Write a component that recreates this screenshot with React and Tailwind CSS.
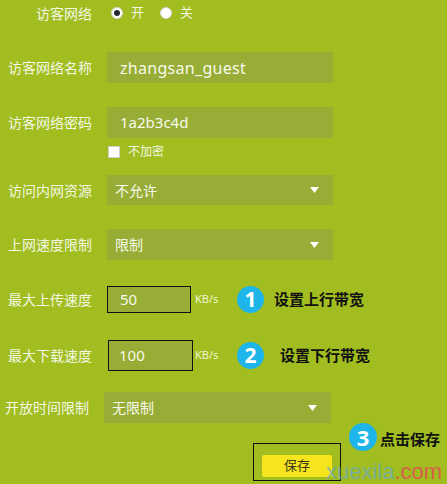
import React from "react";

const labelCls = "w-[92px] text-right text-[14px] text-[#f4f7e2] shrink-0";
const inputCls = "h-full bg-[#97ad36] flex items-center text-[#f7f9ea]";

function Triangle() {
  return (
    <svg width="9" height="6" viewBox="0 0 9 6" className="ml-auto mr-[14px]">
      <path d="M0 0 L9 0 L4.5 6 Z" fill="#ffffff" />
    </svg>
  );
}

function Radio({ checked }) {
  return (
    <span className="w-[12px] h-[12px] rounded-full bg-white border border-[#d8d8d8] flex items-center justify-center">
      {checked && <span className="w-[6px] h-[6px] rounded-full bg-[#222a33]" />}
    </span>
  );
}

function Badge({ n }) {
  return (
    <span className="w-[27px] h-[27px] rounded-full bg-[#1db5ea] text-white font-bold text-[21px] flex items-center justify-center leading-none">
      {n}
    </span>
  );
}

export default function App() {
  return (
    <div
      className="relative w-[447px] h-[484px] overflow-hidden bg-[#a1bd1f]"
      style={{ fontFamily: '"Noto Sans", "Noto Sans CJK SC", sans-serif' }}
    >
      {/* 访客网络 开/关 */}
      <div className="flex items-center h-[26px]">
        <span className={labelCls}>访客网络</span>
        <span className="ml-[19px]"><Radio checked /></span>
        <span className="ml-[8px] text-[13px] text-[#f4f7e2]">开</span>
        <span className="ml-[16px]"><Radio /></span>
        <span className="ml-[8px] text-[13px] text-[#f4f7e2]">关</span>
      </div>

      <div className="flex items-center mt-[26px] h-[31px]">
        <span className={labelCls}>访客网络名称</span>
        <div className={`${inputCls} ml-[15px] w-[226px] pl-[13px] text-[16px] tracking-[0.3px]`}>zhangsan_guest</div>
      </div>

      <div className="flex items-center mt-[24px] h-[31px]">
        <span className={labelCls}>访客网络密码</span>
        <div className={`${inputCls} ml-[15px] w-[226px] pl-[13px] text-[15px]`}>1a2b3c4d</div>
      </div>

      <div className="flex items-center mt-[8px] h-[12px] pl-[108px]">
        <span className="w-[12px] h-[12px] bg-white border border-[#cfcfcf]" />
        <span className="ml-[8px] text-[12px] text-[#f4f7e2]">不加密</span>
      </div>

      <div className="flex items-center mt-[17px] h-[30px]">
        <span className={labelCls}>访问内网资源</span>
        <div className={`${inputCls} ml-[15px] w-[226px] pl-[8px] text-[14px]`}>
          不允许
          <Triangle />
        </div>
      </div>

      <div className="flex items-center mt-[24px] h-[31px]">
        <span className={labelCls}>上网速度限制</span>
        <div className={`${inputCls} ml-[15px] w-[226px] pl-[8px] text-[14px]`}>
          限制
          <Triangle />
        </div>
      </div>

      <div className="flex items-center mt-[26px] h-[27px]">
        <span className={labelCls}>最大上传速度</span>
        <div className={`${inputCls} ml-[15px] w-[84px] pl-[12px] text-[15px] border border-[#111]`}>50</div>
        <span className="ml-[4px] w-[26px] text-[11px] text-[#f1f6d4]">KB/s</span>
        <span className="ml-[16px]"><Badge n="1" /></span>
        <span className="ml-[10px] text-[15px] font-bold text-[#111]">设置上行带宽</span>
      </div>

      <div className="flex items-center mt-[27px] h-[31px]">
        <span className={labelCls}>最大下载速度</span>
        <div className={`${inputCls} ml-[16px] w-[85px] pl-[10px] text-[15px] border border-[#111]`}>100</div>
        <span className="ml-[2px] w-[26px] text-[11px] text-[#f1f6d4]">KB/s</span>
        <span className="ml-[16px]"><Badge n="2" /></span>
        <span className="ml-[16px] text-[15px] font-bold text-[#111]">设置下行带宽</span>
      </div>

      <div className="flex items-center mt-[21px] h-[31px]">
        <span className="w-[89px] text-right text-[14px] text-[#f4f7e2] shrink-0">开放时间限制</span>
        <div className={`${inputCls} ml-[15px] w-[227px] pl-[8px] text-[14px]`}>
          无限制
          <Triangle />
        </div>
      </div>

      <div className="flex mt-[20px] pl-[253px]">
        <div className="w-[88px] h-[38px] border border-[#111] pl-[8px] pt-[8px]">
          <button className="w-[70px] h-[22px] rounded-[2px] bg-[#f6e41c] text-[13px] text-[#3a3a1a] leading-none">
            保存
          </button>
        </div>
      </div>

      {/* callout 3 */}
      <div className="absolute left-[349px] top-[423px] flex items-center">
        <span className="w-[28px] h-[28px] rounded-full bg-[#1db5ea] text-white font-bold text-[22px] flex items-center justify-center leading-none">
          3
        </span>
        <span className="ml-[3px] mt-[4px] text-[15px] font-bold text-[#111]">点击保存</span>
      </div>

      {/* watermark */}
      <div
        className="absolute left-[326px] top-[461px] text-[22px] leading-none"
        style={{ fontFamily: '"Liberation Sans", Arial, sans-serif' }}
      >
        <span className="text-[#6fa9b6]/80">xuexila</span>
        <span className="text-[#d8604a]">.com</span>
      </div>
    </div>
  );
}
